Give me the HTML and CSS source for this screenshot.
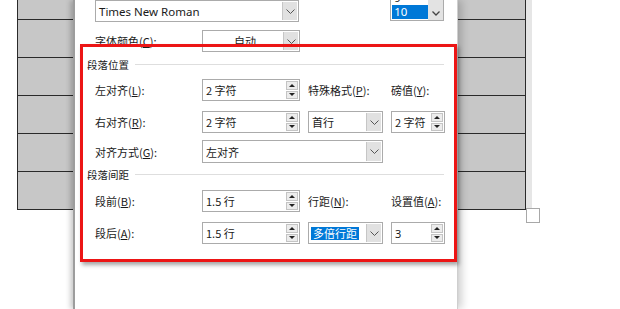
FILE: index.html
```html
<!DOCTYPE html>
<html lang="zh-CN">
<head>
    <meta charset="UTF-8">
    <title>段落设置</title>
    <link rel="stylesheet" href="styles.css">
</head>
<body>
    <div class="page">
        <!-- table behind the dialog, left side -->
        <div class="doc-left">
            <div class="cell top"></div>
            <div class="cell"></div>
            <div class="cell"></div>
            <div class="cell"></div>
            <div class="cell"></div>
            <div class="cell"></div>
        </div>

        <div class="dialog">
            <div class="font-row">
                <div class="combo font-combo">
                    <span class="combo-text latin">Times New Roman</span>
                    <span class="combo-arrow"><svg width="9" height="5" viewBox="0 0 9 5"><polyline points="0.5,0.5 4.5,4.5 8.5,0.5" fill="none" stroke="#555" stroke-width="1"/></svg></span>
                </div>
                <div class="size-list">
                    <div class="size-items">
                        <div class="size-item latin">9</div>
                        <div class="size-item selected latin">10</div>
                    </div>
                    <div class="size-scroll">
                        <svg width="8" height="5" viewBox="0 0 8 5"><polyline points="0.5,0.5 4,4 7.5,0.5" fill="none" stroke="#444" stroke-width="1.3"/></svg>
                    </div>
                </div>
            </div>

            <div class="field-row color-row">
                <label>字体颜色(<u>C</u>):</label>
                <div class="combo">
                    <span class="combo-text centered">自动</span>
                    <span class="combo-arrow"><svg width="9" height="5" viewBox="0 0 9 5"><polyline points="0.5,0.5 4.5,4.5 8.5,0.5" fill="none" stroke="#555" stroke-width="1"/></svg></span>
                </div>
            </div>

            <div class="group-head first-head">
                <span>段落位置</span>
                <span class="group-line"></span>
            </div>

            <div class="field-row row-left">
                <label>左对齐(<u>L</u>):</label>
                <div class="spin">
                    <span class="spin-text">2 字符</span>
                    <span class="spin-btns"><span class="spin-up"></span><span class="spin-down"></span></span>
                </div>
                <label>特殊格式(<u>P</u>):</label>
                <label>磅值(<u>Y</u>):</label>
            </div>

            <div class="field-row row-right">
                <label>右对齐(<u>R</u>):</label>
                <div class="spin">
                    <span class="spin-text">2 字符</span>
                    <span class="spin-btns"><span class="spin-up"></span><span class="spin-down"></span></span>
                </div>
                <div class="combo">
                    <span class="combo-text">首行</span>
                    <span class="combo-arrow"><svg width="9" height="5" viewBox="0 0 9 5"><polyline points="0.5,0.5 4.5,4.5 8.5,0.5" fill="none" stroke="#555" stroke-width="1"/></svg></span>
                </div>
                <div class="spin">
                    <span class="spin-text">2 字符</span>
                    <span class="spin-btns"><span class="spin-up"></span><span class="spin-down"></span></span>
                </div>
            </div>

            <div class="field-row row-align">
                <label>对齐方式(<u>G</u>):</label>
                <div class="combo wide">
                    <span class="combo-text">左对齐</span>
                    <span class="combo-arrow"><svg width="9" height="5" viewBox="0 0 9 5"><polyline points="0.5,0.5 4.5,4.5 8.5,0.5" fill="none" stroke="#555" stroke-width="1"/></svg></span>
                </div>
            </div>

            <div class="group-head second-head">
                <span>段落间距</span>
                <span class="group-line"></span>
            </div>

            <div class="field-row row-before">
                <label>段前(<u>B</u>):</label>
                <div class="spin">
                    <span class="spin-text">1.5 行</span>
                    <span class="spin-btns"><span class="spin-up"></span><span class="spin-down"></span></span>
                </div>
                <label>行距(<u>N</u>):</label>
                <label>设置值(<u>A</u>):</label>
            </div>

            <div class="field-row row-after">
                <label>段后(<u>A</u>):</label>
                <div class="spin">
                    <span class="spin-text">1.5 行</span>
                    <span class="spin-btns"><span class="spin-up"></span><span class="spin-down"></span></span>
                </div>
                <div class="combo">
                    <span class="combo-text"><span class="picked">多倍行距</span></span>
                    <span class="combo-arrow"><svg width="9" height="5" viewBox="0 0 9 5"><polyline points="0.5,0.5 4.5,4.5 8.5,0.5" fill="none" stroke="#555" stroke-width="1"/></svg></span>
                </div>
                <div class="spin">
                    <span class="spin-text latin">3</span>
                    <span class="spin-btns"><span class="spin-up"></span><span class="spin-down"></span></span>
                </div>
            </div>

            <!-- red annotation frame drawn over the paragraph options -->
            <div class="highlight"></div>
        </div>

        <!-- table behind the dialog, right side -->
        <div class="doc-right">
            <div class="rrow top"><div class="rcell"></div><div class="rstub"></div></div>
            <div class="rrow"><div class="rcell"></div><div class="rstub"></div></div>
            <div class="rrow"><div class="rcell"></div><div class="rstub"></div></div>
            <div class="rrow"><div class="rcell"></div><div class="rstub"></div></div>
            <div class="rrow"><div class="rcell"></div><div class="rstub"></div></div>
            <div class="rrow"><div class="rcell"></div><div class="rstub"></div></div>
            <div class="handle"></div>
        </div>
    </div>
</body>
</html>
```

FILE: styles.css
```css
body {
    margin: 0;
    background: #fff;
    color: #1a1a1a;
    font-family: "Noto Sans CJK SC", "Noto Sans", sans-serif;
    font-size: 11px;
}

.page {
    display: flex;
    width: 620px;
    height: 309px;
    overflow: hidden;
}

.latin {
    font-family: "Noto Sans", "Noto Sans CJK SC", sans-serif;
}

u {
    text-decoration: underline;
    text-underline-offset: 1px;
}

/* Document table (background) */
.doc-left {
    margin-left: 17px;
    width: 55px;
    align-self: flex-start;
    border-left: 1px solid #2a2a2a;
}

.doc-left .cell {
    height: 37px;
    background: #c7c7c7;
    border-bottom: 1px solid #2a2a2a;
}

.doc-left .cell.top {
    height: 19px;
}

.doc-right {
    align-self: flex-start;
    display: flex;
    flex-direction: column;
}

.rrow {
    display: flex;
    height: 38px;
}

.rrow.top {
    height: 20px;
}

.rcell {
    width: 67px;
    background: #c7c7c7;
    border-right: 1px solid #2a2a2a;
    border-bottom: 1px solid #2a2a2a;
}

.rstub {
    width: 6px;
    background: #e6e6e6;
}

.handle {
    width: 12px;
    height: 13px;
    margin-left: 68px;
    margin-top: -2px;
    border: 1px solid #a8a8a8;
    background: #fff;
}

/* Dialog */
.dialog {
    position: relative;
    z-index: 1;
    width: 385px;
    box-sizing: border-box;
    padding-left: 12px;
    padding-right: 13px;
    background: #fff;
    border-left: 2px solid #9d9d9d;
    border-right: 1px solid #cfcfcf;
    box-shadow: -3px 0 5px rgba(0, 0, 0, 0.18), 4px 0 8px rgba(0, 0, 0, 0.18);
}

.font-row {
    display: flex;
    align-items: flex-end;
    height: 25px;
    margin-top: -3px;
    margin-left: 8px;
}

.font-combo {
    width: 205px;
    height: 25px;
}

.size-list {
    display: flex;
    width: 54px;
    height: 30px;
    margin-left: 91px;
    margin-bottom: 1px;
    border: 1px solid #ababab;
    box-sizing: border-box;
    overflow: hidden;
}

.size-items {
    flex: 1;
    display: flex;
    flex-direction: column;
    justify-content: flex-end;
    padding: 0 0 1px 1px;
}

.size-item {
    height: 14px;
    flex-shrink: 0;
    line-height: 14px;
    padding-left: 2px;
    font-size: 11.5px;
}

.size-item.selected {
    background: #0078d7;
    color: #fff;
}

.size-scroll {
    width: 15px;
    background: #e3e3e3;
    display: flex;
    align-items: flex-end;
    justify-content: center;
    padding-bottom: 4px;
}

/* shared controls */
.combo,
.spin {
    display: flex;
    box-sizing: border-box;
    height: 22px;
    border: 1px solid #ababab;
    background: #fff;
}

.combo-text,
.spin-text {
    flex: 1;
    display: flex;
    align-items: center;
    padding-left: 3px;
    white-space: nowrap;
    overflow: hidden;
}

.combo-text.latin {
    font-size: 11.5px;
}

.combo-text.centered {
    justify-content: center;
    padding-left: 4px;
}

.combo-arrow {
    width: 14px;
    margin: 1px 1px 1px 0;
    display: flex;
    align-items: center;
    justify-content: center;
    background: #e1e1e1;
    border-left: 1px solid #c6c6c6;
}

.picked {
    background: #0078d7;
    color: #fff;
    padding: 0 2px;
    margin-left: -1px;
    line-height: 13px;
}

.spin-btns {
    width: 12px;
    margin: 1px 1px 1px 0;
    display: flex;
    flex-direction: column;
    gap: 1px;
}

.spin-up,
.spin-down {
    flex: 1;
    display: flex;
    align-items: center;
    justify-content: center;
    background: #ececec;
    border: 1px solid #c4c4c4;
}

.spin-up::after {
    content: "";
    border-left: 3px solid transparent;
    border-right: 3px solid transparent;
    border-bottom: 3px solid #222;
}

.spin-down::after {
    content: "";
    border-left: 3px solid transparent;
    border-right: 3px solid transparent;
    border-top: 3px solid #222;
}

/* rows */
.field-row {
    display: grid;
    grid-template-columns: 99px 98px 75px 54px;
    column-gap: 8px;
    align-items: center;
    height: 22px;
    margin-left: 8px;
}

.color-row {
    margin-top: 8px;
}

.row-left {
    margin-top: 7px;
}

.row-right {
    margin-top: 10px;
}

.row-align {
    margin-top: 7px;
    height: 23px;
}

.row-align .combo.wide {
    grid-column: 2 / 4;
    height: 23px;
}

.row-before {
    margin-top: 8px;
}

.row-after {
    margin-top: 10px;
}

.group-head {
    display: flex;
    align-items: center;
    gap: 6px;
    height: 16px;
    font-size: 10.5px;
}

.first-head {
    margin-top: 4px;
}

.second-head {
    margin-top: 3px;
}

.group-line {
    flex: 1;
    height: 1px;
    background: #dedede;
}

/* annotation */
.highlight {
    position: absolute;
    left: 5px;
    top: 44px;
    width: 377px;
    height: 218px;
    box-sizing: border-box;
    border: 3px solid #ec1515;
    box-shadow: 2px 3px 4px rgba(0, 0, 0, 0.35);
}
```
